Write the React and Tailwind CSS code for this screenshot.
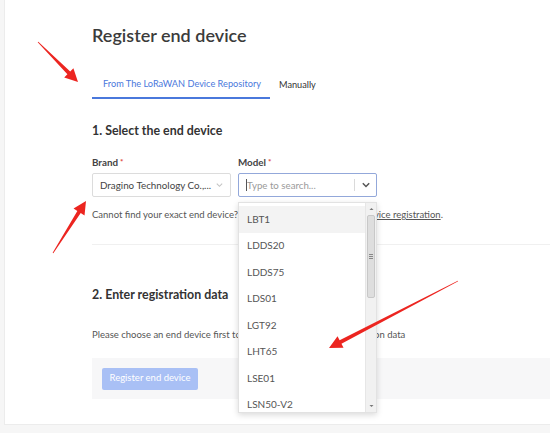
const models = ['LBT1', 'LDDS20', 'LDDS75', 'LDS01', 'LGT92', 'LHT65', 'LSE01', 'LSN50-V2'];

function Arrow({ x1, y1, x2, y2 }) {
  const dx = x2 - x1;
  const dy = y2 - y1;
  const len = Math.sqrt(dx * dx + dy * dy);
  const ux = dx / len;
  const uy = dy / len;
  const px = -uy;
  const py = ux;
  const head = 13;
  const hw = 6.5;
  const bx = x2 - ux * head;
  const by = y2 - uy * head;
  const pts = [
    [x1 + px * 0.4, y1 + py * 0.4],
    [bx + px * 2, by + py * 2],
    [bx + px * hw, by + py * hw],
    [x2, y2],
    [bx - px * hw, by - py * hw],
    [bx - px * 2, by - py * 2],
    [x1 - px * 0.4, y1 - py * 0.4],
  ]
    .map((p) => p.join(','))
    .join(' ');
  return <polygon points={pts} fill="#ec2520" />;
}

export default function App() {
  return (
    <div className="relative w-[550px] h-[433px] overflow-hidden bg-[#f6f6f6] font-['Lato',sans-serif]">
      <div className="ml-[4px] h-[425px] bg-white border-l border-b border-[#ececec] pl-[87px] pt-[22px]">
        <h1 className="text-[18px] leading-[26px] font-semibold text-[#3b3b3b]">Register end device</h1>

        <div className="mt-[22px] flex text-[9.2px]">
          <div className="pl-[11px] pr-[9px] h-[29px] flex items-center border-b-2 border-[#4a78dc] text-[#4a78dc]">
            From The LoRaWAN Device Repository
          </div>
          <div className="pl-[9px] h-[29px] flex items-center text-[#333]">Manually</div>
        </div>

        <h2 className="mt-[23px] text-[12.4px] leading-[18px] font-bold text-[#333]">1. Select the end device</h2>

        <div className="mt-[15px] flex gap-[7px]">
          <div className="w-[139px]">
            <div className="text-[9.8px] leading-[14px] font-bold text-[#444]">
              Brand<span className="text-[#e0463c] align-top text-[8px] ml-[2px]">*</span>
            </div>
            <div className="mt-[4px] h-[24px] border border-[#dcdcdc] rounded-[2px] flex items-center pl-[7px] pr-[6px] text-[9.8px] text-[#444]">
              <span className="flex-1 whitespace-nowrap">Dragino Technology Co.,...</span>
              <svg width="10" height="10" viewBox="0 0 10 10" className="ml-[4px]">
                <path d="M2 3.5 L5 6.5 L8 3.5" fill="none" stroke="#c4c4c4" strokeWidth="1.2" />
              </svg>
            </div>
          </div>
          <div className="w-[139px]">
            <div className="text-[9.8px] leading-[14px] font-bold text-[#444]">
              Model<span className="text-[#e0463c] align-top text-[8px] ml-[2px]">*</span>
            </div>
            <div className="mt-[4px] h-[24px] border border-[#93a8da] rounded-[2px] flex items-center pl-[7px] pr-[5px] text-[9.7px]">
              <span className="w-px h-[12px] bg-[#555]" />
              <span className="flex-1 text-[#9a9a9a]">Type to search...</span>
              <span className="w-px h-[12px] bg-[#dadada] mr-[6px]" />
              <svg width="10" height="10" viewBox="0 0 10 10">
                <path d="M1.8 3.3 L5 6.5 L8.2 3.3" fill="none" stroke="#555" strokeWidth="1.5" />
              </svg>
            </div>
          </div>
        </div>

        <p className="mt-[11px] text-[9.5px] leading-[14px] text-[#555]">
          Cannot find your exact end device? Get help here and try{' '}
          <span className="underline">manual device registration</span>.
        </p>

        <div className="mt-[22px] border-t border-[#f0f0f0]" />

        <h2 className="mt-[41px] text-[12.4px] leading-[18px] font-bold text-[#333]">2. Enter registration data</h2>

        <p className="mt-[24px] text-[9.5px] leading-[14px] text-[#555]">
          Please choose an end device first to proceed with entering registration data
        </p>

        <div className="mt-[16px] h-[41px] bg-[#f7f7f8] flex items-center pl-[10px]">
          <div className="w-[96px] h-[22px] rounded-[2px] bg-[#a9c0f5] text-white text-[9.5px] flex items-center justify-center">
            Register end device
          </div>
        </div>
      </div>

      <div className="absolute left-[238px] top-[202px] w-[139px] h-[211px] bg-white border border-[#e2e2e2] shadow-[0_2px_6px_rgba(0,0,0,0.15)] flex overflow-hidden">
        <div className="flex-1 pt-[3px]">
          {models.map((m, i) => (
            <div
              key={m}
              className={`h-[26.5px] flex items-center pl-[8px] text-[10px] text-[#555] ${i === 0 ? 'bg-[#f3f3f3]' : ''}`}
            >
              {m}
            </div>
          ))}
        </div>
        <div className="w-[11px] bg-[#f1f1f1] border-l border-[#e6e6e6] flex flex-col items-center">
          <svg width="7" height="6" viewBox="0 0 7 6" className="mt-[3px]">
            <path d="M1.5 4 L3.5 2 L5.5 4 Z" fill="#777" />
          </svg>
          <div className="mt-[3px] w-[8px] h-[83px] bg-[#dedede] border border-[#c8c8c8] rounded-[2px] flex flex-col items-center justify-center gap-[1px]">
            <span className="w-[4px] h-px bg-[#888]" />
            <span className="w-[4px] h-px bg-[#888]" />
            <span className="w-[4px] h-px bg-[#888]" />
          </div>
          <div className="flex-1" />
          <svg width="7" height="6" viewBox="0 0 7 6" className="mb-[3px]">
            <path d="M1.5 2 L3.5 4 L5.5 2 Z" fill="#777" />
          </svg>
        </div>
      </div>

      <svg className="absolute inset-0 pointer-events-none" width="550" height="433">
        <Arrow x1={38} y1={42} x2={78} y2={82} />
        <Arrow x1={53} y1={253} x2={86} y2={201} />
        <Arrow x1={458} y1={281} x2={329} y2={348} />
      </svg>
    </div>
  );
}
